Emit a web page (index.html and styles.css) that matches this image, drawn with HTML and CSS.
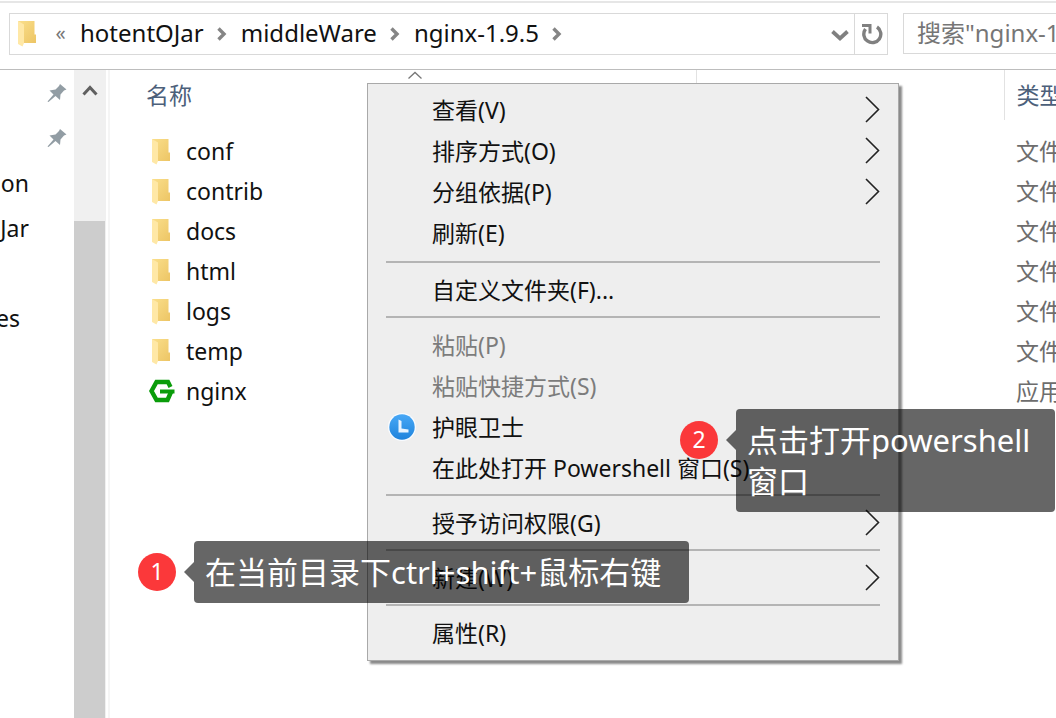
FILE: index.html
```html
<!DOCTYPE html>
<html lang="zh-CN">
<head>
<meta charset="utf-8">
<title>nginx-1.9.5</title>
<link rel="stylesheet" href="styles.css">
</head>
<body>
<svg class="defs" width="0" height="0" aria-hidden="true">
  <defs>
    <linearGradient id="fold" x1="0" x2="1" y1="0" y2="1"><stop offset="0" stop-color="#fadf8b"/><stop offset="1" stop-color="#edc565"/></linearGradient>
    <linearGradient id="blue" x1="0" x2="0" y1="0" y2="1"><stop offset="0" stop-color="#48a8f6"/><stop offset="1" stop-color="#1f83dc"/></linearGradient>
    <symbol id="folder" viewBox="0 0 20 27"><path d="M1 1H17.500V14.500H19V23H3z" fill="url(#fold)"/><path d="M1 1L7 4.500V23L5.500 26.500L1 24z" fill="#ffe8a6"/></symbol>
    <symbol id="pin" viewBox="0 0 20 20"><path d="M13 1L19.500 6.500L17 7.500L13.500 11.500L13 17L8.500 13L1.500 19L.500 18.500L6.500 11.500L2.500 7.500L8.500 6.500L12 3z" fill="#929da4"/></symbol>
    <symbol id="right" viewBox="0 0 10 14"><path d="M1.500 1.500L7 7L1.500 12.500" fill="none" stroke="#858585" stroke-width="3.400"/></symbol>
    <symbol id="sub" viewBox="0 0 15 27"><path d="M1 1L13.500 13.500L1 26" fill="none" stroke="#222" stroke-width="1.600"/></symbol>
  </defs>
</svg>
<div class="window">
  <header class="toolbar">
    <nav class="address" aria-label="地址">
      <svg class="icon-folder" viewBox="0 0 20 27"><use href="#folder"/></svg>
      <button class="back">«</button>
      <button class="crumb">hotentOJar</button><svg class="sep" viewBox="0 0 10 14"><use href="#right"/></svg>
      <button class="crumb">middleWare</button><svg class="sep" viewBox="0 0 10 14"><use href="#right"/></svg>
      <button class="crumb">nginx-1.9.5</button><svg class="sep" viewBox="0 0 10 14"><use href="#right"/></svg>
      <button class="history" aria-label="历史"><svg width="18" height="13" viewBox="0 0 18 13"><path d="M1.500 2.500L9 9.500L16.500 2.500" fill="none" stroke="#808080" stroke-width="3.800"/></svg></button>
      <button class="refresh" aria-label="刷新"><svg width="22" height="22" viewBox="0 0 22 22"><path d="M16 4A8.500 8.500 0 1 1 4.500 6" fill="none" stroke="#808080" stroke-width="3.400"/><path d="M1 2.500H9V10.500" fill="none" stroke="#808080" stroke-width="3"/></svg></button>
    </nav>
    <div class="search"><input type="text" aria-label="搜索" placeholder='搜索"nginx-1.9.5"'></div>
  </header>
  <div class="body">
    <aside class="tree">
      <ul>
        <li><svg class="pin" viewBox="0 0 20 20"><use href="#pin"/></svg></li>
        <li><svg class="pin" viewBox="0 0 20 20"><use href="#pin"/></svg></li>
        <li class="name name-a">on</li>
        <li class="name name-a">Jar</li>
        <li></li>
        <li class="name name-b">es</li>
      </ul>
    </aside>
    <div class="scrollbar">
      <button class="scroll-up" aria-label="向上滚动"><svg width="16" height="13" viewBox="0 0 16 13"><path d="M1.500 10.500L8 3.500L14.500 10.500" fill="none" stroke="#606060" stroke-width="3"/></svg></button>
      <div class="thumb"></div>
    </div>
    <main class="files">
      <table>
        <colgroup><col class="c-name"><col class="c-date"><col class="c-type"></colgroup>
        <thead><tr><th>名称<svg class="sort" width="16" height="9" viewBox="0 0 16 9"><path d="M1.500 7.500L8 1.500L14.500 7.500" fill="none" stroke="#777" stroke-width="1.300"/></svg></th><th></th><th>类型</th></tr></thead>
        <tbody>
          <tr><td><span class="file"><svg class="icon-folder" viewBox="0 0 20 27"><use href="#folder"/></svg>conf</span></td><td></td><td>文件夹</td></tr>
          <tr><td><span class="file"><svg class="icon-folder" viewBox="0 0 20 27"><use href="#folder"/></svg>contrib</span></td><td></td><td>文件夹</td></tr>
          <tr><td><span class="file"><svg class="icon-folder" viewBox="0 0 20 27"><use href="#folder"/></svg>docs</span></td><td></td><td>文件夹</td></tr>
          <tr><td><span class="file"><svg class="icon-folder" viewBox="0 0 20 27"><use href="#folder"/></svg>html</span></td><td></td><td>文件夹</td></tr>
          <tr><td><span class="file"><svg class="icon-folder" viewBox="0 0 20 27"><use href="#folder"/></svg>logs</span></td><td></td><td>文件夹</td></tr>
          <tr><td><span class="file"><svg class="icon-folder" viewBox="0 0 20 27"><use href="#folder"/></svg>temp</span></td><td></td><td>文件夹</td></tr>
          <tr><td><span class="file"><svg class="icon-app" viewBox="0 0 26 24"><path d="M21.500 8L19 3H7.500L2.500 12L7.500 21H18.500L22 13" fill="none" stroke="#0a9c0a" stroke-width="4.400"/><path d="M11 12.500H25.500" stroke="#0a9c0a" stroke-width="4"/></svg>nginx</span></td><td></td><td>应用程序</td></tr>
        </tbody>
      </table>
    </main>
  </div>

  <div class="menu" role="menu">
    <button role="menuitem">查看(V)<svg class="sub" viewBox="0 0 15 27"><use href="#sub"/></svg></button>
    <button role="menuitem">排序方式(O)<svg class="sub" viewBox="0 0 15 27"><use href="#sub"/></svg></button>
    <button role="menuitem">分组依据(P)<svg class="sub" viewBox="0 0 15 27"><use href="#sub"/></svg></button>
    <button role="menuitem">刷新(E)</button>
    <hr>
    <button role="menuitem">自定义文件夹(F)...</button>
    <hr>
    <button role="menuitem" disabled>粘贴(P)</button>
    <button role="menuitem" disabled>粘贴快捷方式(S)</button>
    <button role="menuitem"><svg class="guard" viewBox="0 0 28 28"><circle cx="14" cy="14" r="14" fill="#f8fbff"/><circle cx="14" cy="14" r="12.700" fill="url(#blue)"/><path d="M10.500 6.500L13.500 8V15.500L20.500 16.500V19.500H10.500z" fill="#e9f4ff"/></svg>护眼卫士</button>
    <button role="menuitem">在此处打开 Powershell 窗口(S)</button>
    <hr>
    <button role="menuitem">授予访问权限(G)<svg class="sub" viewBox="0 0 15 27"><use href="#sub"/></svg></button>
    <hr>
    <button role="menuitem">新建(W)<svg class="sub" viewBox="0 0 15 27"><use href="#sub"/></svg></button>
    <hr>
    <button role="menuitem">属性(R)</button>
  </div>

  <div class="note note-one"><span class="number">1</span><p>在当前目录下ctrl+shift+鼠标右键</p></div>
  <div class="note note-two"><span class="number">2</span><p>点击打开powershell<br>窗口</p></div>
</div>
</body>
</html>
```

FILE: styles.css
```css
* { box-sizing: border-box; }
body {
  margin: 0;
  overflow: hidden;
  background: #fff;
  color: #111;
  font: 23px/30px "Noto Sans", "Noto Sans CJK SC", sans-serif;
}
button, input { font: inherit; color: inherit; border: 0; padding: 0; background: none; }
.defs { position: absolute; }
.window {
  position: relative;
  display: flex;
  flex-direction: column;
  min-height: 100vh;
  overflow: hidden;
}

/* Address bar and search */
.toolbar {
  display: flex;
  gap: 15px;
  height: 69px;
  padding: 10px 0 15px 9px;
  border-top: 2px solid #e6e6e6;
  border-bottom: 1px solid #bdbdbd;
  margin-top: 1px;
}
.address {
  flex: 1;
  display: flex;
  align-items: center;
  height: 42px;
  padding-left: 7px;
  border: 1px solid #d9d9d9;
}
.icon-folder { width: 20px; height: 27px; flex: none; }
.address .icon-folder { margin-bottom: 2px; }
.back { width: 13px; margin: 0 13px 2px 17px; font-size: 20px; color: #777; }
.crumb { padding-bottom: 2px; font-size: 24px; white-space: nowrap; }
.sep { width: 10px; height: 14px; margin: 0 14px 0 13px; flex: none; }
.history { margin: 2px 5px 0 auto; line-height: 0; }
.refresh {
  width: 33px;
  align-self: stretch;
  display: grid;
  place-items: center;
  padding-left: 2px;
  border-left: 1px solid #d9d9d9;
}
.search {
  flex: none;
  width: 153px;
  height: 41px;
  padding-left: 13px;
  overflow: hidden;
  border: 1px solid #d9d9d9;
  border-right: 0;
}
.search input { width: 240px; height: 37px; font-size: 24px; }
.search input::placeholder { color: #767676; opacity: 1; }

/* Navigation tree */
.body { flex: 1; display: flex; }
.tree { width: 74px; overflow: hidden; }
.tree ul { margin: 0; padding: 0; list-style: none; }
.tree li { display: flex; align-items: center; height: 45px; }
.pin { width: 20px; height: 20px; margin-left: 47px; }
.name { justify-content: flex-end; }
.name-a { padding-right: 45px; }
.name-b { padding-right: 54px; }
.scrollbar { display: flex; flex-direction: column; width: 32px; background: #f0f0f0; }
.scroll-up { height: 36px; }
.thumb { flex: 1; margin: 115px 1px 0 0; background: #cdcdcd; }

/* File list */
.files {
  flex: 1;
  min-width: 0;
  overflow: hidden;
  margin-left: 2px;
  padding-left: 24px;
  border-left: 2px solid #f5f5f5;
}
table { table-layout: fixed; width: 1100px; border-collapse: collapse; }
.c-name { width: 562px; }
.c-date { width: 308px; }
th, td { padding: 0 0 0 12px; text-align: left; font-weight: 400; }
th { position: relative; height: 50px; border-right: 1px solid #e2e2e2; color: #4c607a; }
.sort { position: absolute; top: 1px; left: 50%; margin-left: -8px; }
tbody::before { content: ""; display: block; height: 11px; }
td { height: 40px; color: #6d6d6d; }
.file { display: flex; align-items: center; gap: 15px; padding-left: 5px; color: #111; }
.icon-app { width: 26px; height: 24px; margin: 0 -4px 0 -2px; }

/* Context menu */
.menu {
  position: absolute;
  left: 367px;
  top: 83px;
  width: 532px;
  padding: 5px 18px 7px;
  background: #eee;
  border: 1px solid #a9a9a9;
  box-shadow: 3px 3px 2px #8a8a8a;
}
.menu button {
  display: flex;
  align-items: center;
  width: 100%;
  height: 41px;
  padding-left: 46px;
  white-space: pre;
}
.menu button:disabled { color: #7c7c7c; }
.menu hr { height: 2px; margin: 6px 0; border: 0; background: #b4b4b4; }
.menu hr:first-of-type { margin-top: 8px; }
.sub { width: 15px; height: 27px; margin-left: auto; }
.guard { width: 28px; height: 28px; margin: 0 16px 0 -44px; }

/* Numbered callouts */
.note {
  position: absolute;
  display: flex;
  gap: 18px;
  color: #fff;
  font-size: 31px;
  line-height: 41px;
}
.note-one { left: 138px; top: 541px; align-items: center; }
.note-two { left: 680px; top: 409px; }
.number {
  width: 38px;
  height: 38px;
  border-radius: 50%;
  background: #fb383a;
  font-size: 23px;
  line-height: 36px;
  text-align: center;
}
.note-two .number { margin-top: 12px; }
.note p {
  position: relative;
  margin: 0;
  padding: 11px 25px 10px 11px;
  border-radius: 4px;
  background: rgba(0, 0, 0, .6);
  white-space: nowrap;
}
.note-one p { padding-right: 28px; }
.note p::before {
  content: "";
  position: absolute;
  right: 100%;
  top: 21px;
  border: 10px solid transparent;
  border-left-width: 0;
  border-right-color: rgba(0, 0, 0, .6);
}
```
